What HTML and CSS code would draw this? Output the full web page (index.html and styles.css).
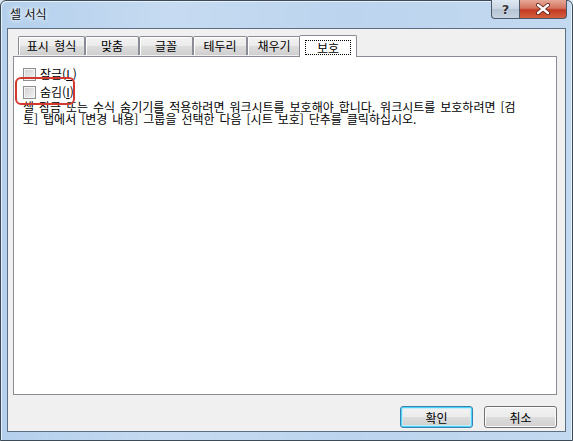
FILE: index.html
```html
<!DOCTYPE html>
<html lang="ko">
<head>
    <meta charset="UTF-8">
    <title>셀 서식</title>
    <link rel="stylesheet" href="styles.css">
</head>
<body>
    <div class="window">
        <div class="titlebar">
            <span class="title">셀 서식</span>
            <div class="caption">
                <div class="cap-btn help">?</div>
                <div class="cap-btn close">
                    <svg width="16" height="12" viewBox="0 0 16 12">
                        <path d="M3 2 L13 10 M13 2 L3 10" stroke="#5a1a14" stroke-width="4" stroke-linecap="round"/>
                        <path d="M3 2 L13 10 M13 2 L3 10" stroke="#fff" stroke-width="2.4" stroke-linecap="round"/>
                    </svg>
                </div>
            </div>
        </div>
        <div class="client">
            <div class="tabs">
                <div class="tab first">표시 형식</div>
                <div class="tab">맞춤</div>
                <div class="tab">글꼴</div>
                <div class="tab">테두리</div>
                <div class="tab">채우기</div>
                <div class="tab active"><span class="focus">보호</span></div>
            </div>
            <div class="panel">
                <div class="check"><span class="box"></span>잠금(<u>L</u>)</div>
                <div class="check"><span class="box"></span>숨김(<u>I</u>)</div>
                <p class="note">셀 잠금 또는 수식 숨기기를 적용하려면 워크시트를 보호해야 합니다. 워크시트를 보호하려면 [검<br>토] 탭에서 [변경 내용] 그룹을 선택한 다음 [시트 보호] 단추를 클릭하십시오.</p>
                <div class="highlight"></div>
            </div>
            <div class="footer">
                <button class="btn default">확인</button>
                <button class="btn">취소</button>
            </div>
        </div>
    </div>
</body>
</html>
```

FILE: styles.css
```css
body {
    margin: 0;
    font-family: "Noto Sans CJK KR", "Noto Sans", sans-serif;
    font-size: 12px;
    color: #000;
    background: #dbe7f3;
}

.window {
    width: 573px;
    height: 441px;
    box-sizing: border-box;
    display: flex;
    flex-direction: column;
    padding: 0 6px 8px 6px;
    border: 1px solid #3d4a58;
    border-radius: 6px 6px 0 0;
    background: linear-gradient(to right, #b4cfec 0%, #c6dbf1 30%, #bcd4ee 60%, #c3d9f0 100%);
    box-shadow: inset 1px 1px 0 #e6f0fa, inset -1px 0 0 #e6f0fa;
}

.titlebar {
    height: 27px;
    display: flex;
    justify-content: space-between;
    align-items: flex-start;
}

.title {
    margin: 6px 0 0 3px;
    font-size: 12px;
    line-height: 14px;
    color: #111;
    text-shadow: 0 0 4px #fff, 0 0 6px #fff;
}

.caption {
    display: flex;
    margin-top: -1px;
    margin-right: -1px;
}

.cap-btn {
    height: 19px;
    display: flex;
    align-items: center;
    justify-content: center;
    border: 1px solid #4a5868;
    border-top: none;
    box-sizing: border-box;
}

.help {
    width: 28px;
    border-radius: 0 0 0 4px;
    border-right: none;
    background: linear-gradient(#dfe8f1 0%, #c8d5e2 50%, #b4c3d3 51%, #c6d3e0 100%);
    color: #333;
    font-family: "DejaVu Sans", sans-serif;
    font-weight: bold;
    font-size: 13px;
    text-shadow: 0 0 2px #fff;
}

.close {
    width: 48px;
    border-radius: 0 0 4px 0;
    background: linear-gradient(#e6a898 0%, #d47560 45%, #c23b22 55%, #d4603f 100%);
}

.client {
    flex: 1;
    display: flex;
    flex-direction: column;
    padding: 6px 8px 0 5px;
    background: #f0f0f0;
    border: 1px solid #5d6f82;
}

.tabs {
    display: flex;
    align-items: flex-end;
    padding-left: 5px;
    height: 22px;
    position: relative;
    z-index: 1;
}

.tab {
    width: 54px;
    height: 19px;
    box-sizing: border-box;
    margin-bottom: 2px;
    border: 1px solid #898c95;
    border-bottom: none;
    border-radius: 2px 2px 0 0;
    background: linear-gradient(#f3f3f3 0%, #ebebeb 50%, #dddddd 51%, #cfcfcf 100%);
    box-shadow: inset 1px 1px 0 #fff;
    text-align: center;
    line-height: 18px;
    word-spacing: 2px;
}

.tab.first {
    width: 67px;
}

.tab.active {
    width: 58px;
    height: 22px;
    margin: 0 0 0 -2px;
    background: #fff;
    box-shadow: none;
    padding-top: 3px;
}

.focus {
    display: inline-block;
    width: 46px;
    height: 15px;
    line-height: 14px;
    box-sizing: border-box;
    border: 1px dotted #000;
}

.panel {
    height: 339px;
    box-sizing: border-box;
    margin-top: -1px;
    padding: 8px 10px 0 9px;
    background: #fff;
    border: 1px solid #898c95;
    position: relative;
}

.check {
    display: flex;
    align-items: center;
    height: 18px;
    line-height: 14px;
}

.check u {
    text-decoration: underline;
}

.box {
    width: 13px;
    height: 13px;
    box-sizing: border-box;
    margin-right: 4px;
    border: 1px solid #8e8f8f;
    background: linear-gradient(135deg, #d0d0d0, #f4f4f4);
    box-shadow: inset 0 0 0 1px #f4f4f4;
}

.note {
    margin: 0;
    line-height: 12px;
    white-space: nowrap;
    word-spacing: 1.6px;
}

.highlight {
    position: absolute;
    left: 1px;
    top: 20px;
    width: 60px;
    height: 28px;
    box-sizing: border-box;
    border: 2px solid #d23a30;
    border-radius: 6px;
}

.footer {
    display: flex;
    justify-content: flex-end;
    gap: 11px;
    padding-top: 11px;
}

.btn {
    width: 73px;
    height: 22px;
    font: inherit;
    color: #000;
    padding: 0;
    border: 1px solid #707070;
    border-radius: 3px;
    background: linear-gradient(#f2f2f2 0%, #ebebeb 50%, #dddddd 51%, #cfcfcf 100%);
    box-shadow: inset 0 0 0 1px #fcfcfc;
}

.btn.default {
    border-color: #3c7fb1;
    box-shadow: inset 0 0 0 1px #48d7fb, inset 0 0 0 2px #c6ebfa;
}
```
